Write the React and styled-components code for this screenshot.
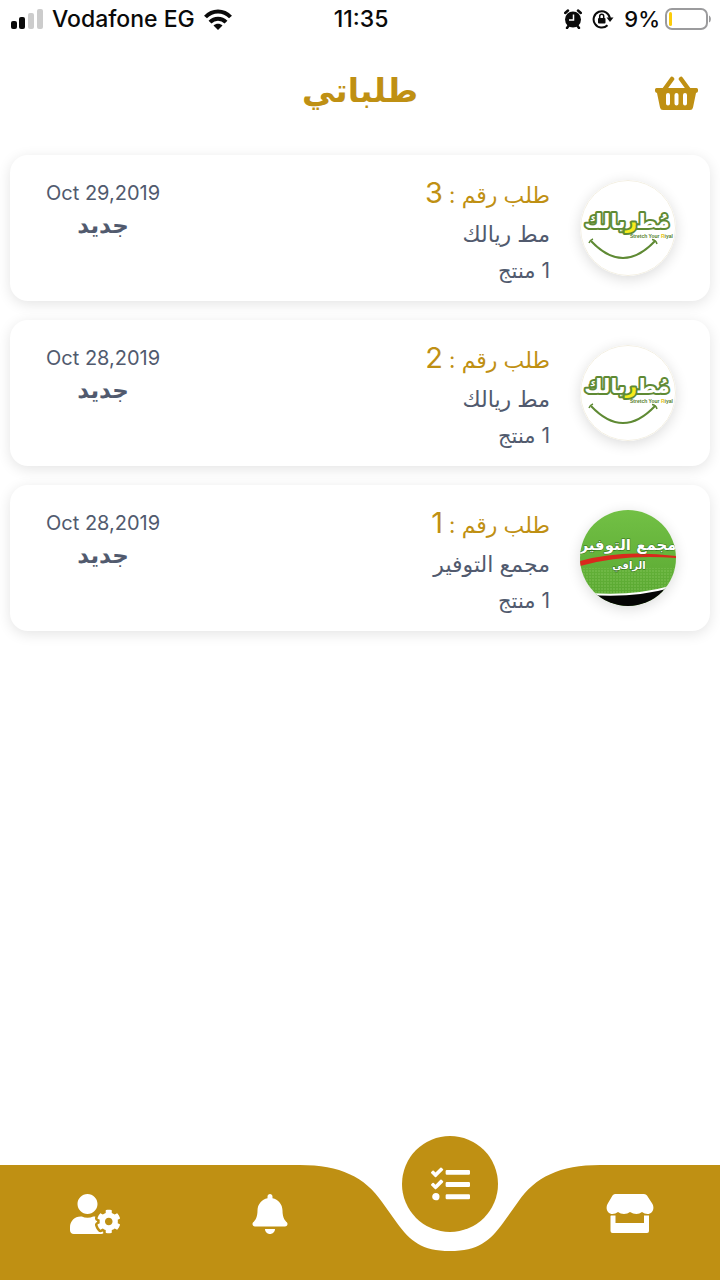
import React from "react";
import styled, { createGlobalStyle } from "styled-components";
import { FaBell, FaTasks, FaUserCog } from "react-icons/fa";

const gold = "#bf9013";
const slate = "#515a6e";

const GlobalStyle = createGlobalStyle`
  *, *::before, *::after { box-sizing: border-box; }
  body {
    margin: 0;
    background: #fff;
    font-family: Inter, "DejaVu Sans", sans-serif;
    color: ${slate};
  }
`;

const Screen = styled.div`
  min-height: 100vh;
  display: flex;
  flex-direction: column;
`;

const StatusBar = styled.div`
  display: grid;
  grid-template-columns: 1fr auto 1fr;
  align-items: center;
  height: 38px;
  padding: 0 9px 0 11px;
  color: #0a0a0a;
  font-size: 23px;
  font-weight: 500;
  line-height: 28px;
`;

const StatusGroup = styled.div`
  display: flex;
  align-items: center;
  gap: ${(p) => p.$gap}px;
  justify-content: ${(p) => (p.$end ? "flex-end" : "flex-start")};
`;

const BatteryLevel = styled.span`
  display: flex;
  align-items: center;
  gap: 5px;
  font-size: 22px;
`;

const Header = styled.header`
  display: grid;
  grid-template-columns: 1fr auto 1fr;
  align-items: center;
  height: 110px;
  padding: 0 22px;
`;

const Title = styled.h1`
  grid-column: 2;
  margin: 0;
  padding-bottom: 6px;
  color: ${gold};
  font-size: 33px;
  font-weight: 700;
  line-height: 52px;
`;

const IconButton = styled.button`
  justify-self: end;
  display: flex;
  padding: 0;
  border: 0;
  background: none;
  color: ${gold};
  cursor: pointer;
`;

const OrderList = styled.ul`
  display: flex;
  flex-direction: column;
  gap: 19px;
  margin: 0;
  padding: 7px 10px 32px;
  list-style: none;
`;

const OrderCard = styled.li`
  display: flex;
  align-items: flex-start;
  justify-content: space-between;
  min-height: 146px;
  padding: 20px 34px 12px 36px;
  border-radius: 18px;
  background: #fff;
  box-shadow: 0 3px 14px rgba(0, 0, 0, 0.11);
`;

const OrderMeta = styled.div`
  display: flex;
  flex-direction: column;
  align-items: center;
  padding-top: 4px;
`;

const OrderDate = styled.time`
  font-size: 20px;
  line-height: 28px;
`;

const OrderStatus = styled.span`
  font-size: 23px;
  font-weight: 700;
  line-height: 36px;
`;

const OrderMain = styled.div`
  display: flex;
  gap: 30px;
`;

const OrderInfo = styled.div`
  display: flex;
  flex-direction: column;
  direction: rtl;
  text-align: right;
`;

const OrderTitle = styled.h2`
  margin: 0;
  color: ${gold};
  font-size: 22px;
  font-weight: 400;
  line-height: 36px;
`;

const OrderNumber = styled.span`
  font-size: 29px;
`;

const StoreName = styled.span`
  font-size: 22px;
  line-height: 42px;
`;

const ItemCount = styled.span`
  font-size: 21px;
  line-height: 32px;
`;

const Logo = styled.div`
  width: 96px;
  height: 96px;
  margin-top: 5px;
  border-radius: 50%;
  overflow: hidden;
  background: #fff;
  box-shadow: 0 3px 14px rgba(0, 0, 0, 0.14);

  svg { display: block; }
`;

const TabBar = styled.nav`
  position: relative;
  display: grid;
  grid-template-columns: repeat(4, 1fr);
  height: 115px;
  margin-top: auto;
`;

const TabBarShape = styled.svg`
  position: absolute;
  inset: 0;
  width: 100%;
  height: 100%;
  fill: ${gold};
`;

const Tab = styled.button`
  position: relative;
  display: flex;
  align-items: flex-start;
  justify-content: center;
  padding: 29px 0 0;
  border: 0;
  background: none;
  color: #fff;
  cursor: pointer;
`;

const IconSlot = styled.span`
  display: flex;
  width: 40px;
  height: 40px;
`;

const AccountIcon = styled(FaUserCog)`
  flex: none;
  width: 50px;
  height: 40px;
`;

const ActiveDisc = styled.span`
  position: absolute;
  top: -29px;
  left: 50%;
  display: flex;
  align-items: center;
  justify-content: center;
  width: 96px;
  height: 96px;
  margin-left: -48px;
  border-radius: 50%;
  background: ${gold};
`;

function SignalIcon() {
  return (
    <svg width="32" height="20" viewBox="0 0 32 20" aria-hidden="true">
      <rect x="0" y="12" width="6" height="8" rx="2" fill="#0a0a0a" />
      <rect x="8" y="8" width="6" height="12" rx="2" fill="#0a0a0a" />
      <rect x="17" y="4" width="6" height="16" rx="2" fill="#ccc" />
      <rect x="26" y="0" width="6" height="20" rx="2" fill="#ccc" />
    </svg>
  );
}

function WifiIcon() {
  return (
    <svg width="28" height="21" viewBox="0 0 28 21" fill="none" stroke="#0a0a0a" strokeWidth="4" aria-hidden="true">
      <path d="M1.5 8C8.500 .5 19.500 .5 26.500 8" />
      <path d="M6 13.200C10.500 8.500 17.500 8.500 22 13.200" />
      <path d="M14 21 9.500 16.500C12 14 16 14 18.500 16.500Z" fill="#0a0a0a" stroke="none" />
    </svg>
  );
}

function AlarmIcon() {
  return (
    <svg width="18" height="20" viewBox="0 0 18 20" aria-hidden="true">
      <circle cx="9" cy="10.500" r="8" fill="#0a0a0a" />
      <path d="M1.200 4 4 1.500M16.800 4 14 1.500M3 19 4.800 16.500M15 19 13.200 16.500" stroke="#0a0a0a" strokeWidth="2.500" strokeLinecap="round" />
      <path d="M9.500 5.500V11H5" fill="none" stroke="#fff" strokeWidth="1.500" />
    </svg>
  );
}

function RotationLockIcon() {
  return (
    <svg width="22" height="20" viewBox="0 0 22 20" fill="none" stroke="#0a0a0a" aria-hidden="true">
      <path d="M15.500 16.300A8.200 8.200 0 1 1 17.900 9" strokeWidth="2" />
      <path d="M14.500 8.500H21.500L18 13Z" fill="#0a0a0a" stroke="none" />
      <rect x="6" y="9" width="7.500" height="5.500" rx="1" fill="#0a0a0a" stroke="none" />
      <path d="M7.700 9V7.200a2 2 0 0 1 4 0V9" strokeWidth="1.500" />
    </svg>
  );
}

function BatteryIcon() {
  return (
    <svg width="46" height="22" viewBox="0 0 46 22" aria-hidden="true">
      <rect x="1" y="1" width="41" height="20" rx="6" fill="none" stroke="#9b9b9d" strokeWidth="2" />
      <rect x="4" y="4" width="3" height="14" rx="1.500" fill="#fccc0a" />
      <path d="M44 7.500c2.500 1 2.500 6 0 7z" fill="#9b9b9d" />
    </svg>
  );
}

function BasketIcon() {
  return (
    <svg width="43" height="34" viewBox="0 0 43 34" aria-hidden="true">
      <path d="M17 3 9 14M26 3 34 14" stroke="currentColor" strokeWidth="4.500" strokeLinecap="round" />
      <path
        fill="currentColor"
        fillRule="evenodd"
        d="M1.500 12H41.500Q43 12 43 13.500V15Q43 16.500 41 17L38 31.500Q37.500 34 35 34H8Q5.500 34 5 31.500L2 17Q0 16.500 0 15V13.500Q0 12 1.500 12ZM13 17a2 2 0 0 0-2 2v8.500a2 2 0 0 0 4 0V19a2 2 0 0 0-2-2ZM21.500 17a2 2 0 0 0-2 2v8.500a2 2 0 0 0 4 0V19a2 2 0 0 0-2-2ZM30 17a2 2 0 0 0-2 2v8.500a2 2 0 0 0 4 0V19a2 2 0 0 0-2-2Z"
      />
    </svg>
  );
}

function ShopIcon() {
  return (
    <svg width="48" height="39" viewBox="0 0 48 39" fill="#fff" aria-hidden="true">
      <path d="M9 0H38Q40 0 41 1.500L46.500 10C49 15 46 20 41.500 20Q38.500 20 36 18Q33.500 20 30.500 20Q27 20 24 18Q21.500 20 18 20Q14.500 20 12 18Q9.500 20 6.500 20C2 20-1 15 1.500 10L6.500 1.500Q7.500 0 9 0Z" />
      <path fillRule="evenodd" d="M5 21.500H9.500V29H38V21.500H43V37Q43 39 41 39H6.500Q4.500 39 4.500 37V22Z" />
    </svg>
  );
}

function RiyalLogo() {
  return (
    <svg width="96" height="96" viewBox="0 0 96 96" role="img" aria-label="مط ريالك">
      <circle cx="48" cy="48" r="47.500" fill="#fff" stroke="#f3efe2" />
      <text
        x="47"
        y="48"
        fontSize="20"
        fontWeight="700"
        fontFamily="DejaVu Sans"
        direction="rtl"
        textAnchor="middle"
        fill="#fff"
        stroke="#5f8a34"
        strokeWidth="4"
        strokeLinejoin="round"
        paintOrder="stroke"
      >
        مُط<tspan fill="#f6ec1c">ر</tspan>يالك
      </text>
      <text x="50" y="58" fontSize="5" fontWeight="700" fontFamily="Liberation Sans" fill="#55802d">
        Stretch Your <tspan fill="#e8c61a">R</tspan>iyal
      </text>
      <path d="M11 61Q43 95 75 61" fill="none" stroke="#5f8a34" strokeWidth="2" />
      <path d="M9 63Q10 60 13 59M72 59.500Q76 60 77 64" fill="none" stroke="#5f8a34" strokeWidth="1.500" />
    </svg>
  );
}

function TawfeerLogo() {
  return (
    <svg width="96" height="96" viewBox="0 0 96 96" role="img" aria-label="مجمع التوفير">
      <defs>
        <linearGradient id="field" x1="0" y1="0" x2="0" y2="1">
          <stop offset="0" stopColor="#72c045" />
          <stop offset="1" stopColor="#57a52f" />
        </linearGradient>
        <pattern id="dots" width="3" height="3" patternUnits="userSpaceOnUse">
          <circle cx="1" cy="1" r="0.700" fill="#86c85c" />
        </pattern>
      </defs>
      <rect width="96" height="96" fill="url(#field)" />
      <rect y="58" width="96" height="26" fill="url(#dots)" />
      <path d="M0 51Q42 39 96 46V48Q42 44 0 56Z" fill="#d9291c" />
      <path d="M0 84Q50 88 96 76V96H0Z" fill="#050505" />
      <path d="M10 84Q55 87 90 77" fill="none" stroke="#fff" strokeWidth="2" />
      <g
        fontFamily="DejaVu Sans"
        fontWeight="700"
        textAnchor="middle"
        fill="#fff"
        stroke="#2f6d1c"
        strokeWidth="1"
        paintOrder="stroke"
      >
        <text x="48" y="40" fontSize="15">مجمع التوفير</text>
        <text x="49" y="59" fontSize="10">الراقي</text>
      </g>
    </svg>
  );
}

const orders = [
  { id: 3, store: "مط ريالك", items: 1, date: "Oct 29,2019", status: "جديد", logo: RiyalLogo },
  { id: 2, store: "مط ريالك", items: 1, date: "Oct 28,2019", status: "جديد", logo: RiyalLogo },
  { id: 1, store: "مجمع التوفير", items: 1, date: "Oct 28,2019", status: "جديد", logo: TawfeerLogo },
];

function Order({ id, store, items, date, status, logo: StoreLogo }) {
  return (
    <OrderCard>
      <OrderMeta>
        <OrderDate>{date}</OrderDate>
        <OrderStatus>{status}</OrderStatus>
      </OrderMeta>
      <OrderMain>
        <OrderInfo>
          <OrderTitle>
            طلب رقم : <OrderNumber>{id}</OrderNumber>
          </OrderTitle>
          <StoreName>{store}</StoreName>
          <ItemCount>{items} منتج</ItemCount>
        </OrderInfo>
        <Logo>
          <StoreLogo />
        </Logo>
      </OrderMain>
    </OrderCard>
  );
}

export default function App() {
  return (
    <Screen>
      <GlobalStyle />
      <StatusBar>
        <StatusGroup $gap={9}>
          <SignalIcon />
          <span>Vodafone EG</span>
          <WifiIcon />
        </StatusGroup>
        <span>11:35</span>
        <StatusGroup $gap={10} $end>
          <AlarmIcon />
          <RotationLockIcon />
          <BatteryLevel>
            9%
            <BatteryIcon />
          </BatteryLevel>
        </StatusGroup>
      </StatusBar>
      <Header>
        <Title>طلباتي</Title>
        <IconButton aria-label="السلة">
          <BasketIcon />
        </IconButton>
      </Header>
      <main>
        <OrderList>
          {orders.map((order) => (
            <Order key={order.id} {...order} />
          ))}
        </OrderList>
      </main>
      <TabBar>
        <TabBarShape viewBox="0 0 720 115" preserveAspectRatio="none" aria-hidden="true">
          <path d="M0 0H300C340 0 365 12 382 37L397 58C410 76 422 86 450 86C478 86 490 76 503 58L518 37C535 12 560 0 600 0H720V115H0Z" />
        </TabBarShape>
        <Tab aria-label="الحساب">
          <IconSlot>
            <AccountIcon />
          </IconSlot>
        </Tab>
        <Tab aria-label="الإشعارات">
          <IconSlot>
            <FaBell size={40} />
          </IconSlot>
        </Tab>
        <Tab aria-label="طلباتي" aria-current="page">
          <ActiveDisc>
            <FaTasks size={39} />
          </ActiveDisc>
        </Tab>
        <Tab aria-label="المتاجر">
          <ShopIcon />
        </Tab>
      </TabBar>
    </Screen>
  );
}
